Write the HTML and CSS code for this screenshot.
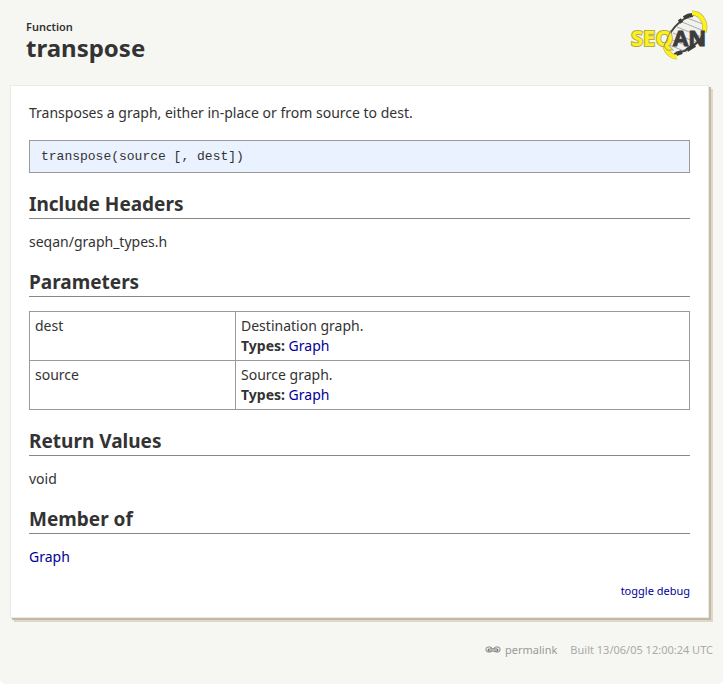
FILE: index.html
```html
<!DOCTYPE html>
<html lang="en">
<head>
<meta charset="utf-8">
<title>transpose</title>
<link rel="stylesheet" href="styles.css">
</head>
<body>
<header class="page-header">
  <div class="title-block">
    <div class="kind">Function</div>
    <h1>transpose</h1>
  </div>
  <svg class="logo" viewBox="0 0 78 50" role="img" aria-label="SeqAn">
    <path class="strand-fill" d="M40 42C33 34 41 19 52 10C59 4 64 3 68 6C78 14 71 29 59 37C50 43 43 47 40 42Z"/>
    <path class="rung" d="M57 7L73 13M52 11L74 20M47 16L74 27M43 22L68 32M40 28L62 37M39 34L57 41"/>
    <path class="strand-dark" d="M39 25C42 18 48 12 54 8Q59 4 64 4M73 24C70 31 62 36 54 40Q49 43 44 43"/>
    <path class="strand-dark-wide" d="M49 11L52 9M54 7Q58 4 63 4M46 43L52 41M57 39L65 34"/>
    <path class="strand-outline" d="M62 2C71 2 77 12 74 21M35 33C35 39 40 46 47 46"/>
    <path class="strand-yellow" d="M62 2C71 2 77 12 74 21M35 33C35 39 40 46 47 46"/>
    <text class="logo-seq" x="1" y="35">SEQ</text>
    <text class="logo-an" x="43" y="35">AN</text>
    <path class="logo-slash" d="M34 35L41 19"/>
  </svg>
</header>
<main class="card">
  <p>Transposes a graph, either in-place or from source to dest.</p>
  <pre class="signature">transpose(source [, dest])</pre>
  <h2>Include Headers</h2>
  <p>seqan/graph_types.h</p>
  <h2>Parameters</h2>
  <table class="params">
    <tbody>
      <tr><td class="param-name">dest</td><td>Destination graph.<br><strong>Types:</strong> <a href="#graph">Graph</a></td></tr>
      <tr><td class="param-name">source</td><td>Source graph.<br><strong>Types:</strong> <a href="#graph">Graph</a></td></tr>
    </tbody>
  </table>
  <h2>Return Values</h2>
  <p>void</p>
  <h2>Member of</h2>
  <p><a href="#graph">Graph</a></p>
  <div class="debug"><a href="#debug">toggle debug</a></div>
</main>
<footer class="page-footer">
  <a class="permalink" href="#permalink"><svg class="chain" viewBox="0 0 16 8" aria-hidden="true">
    <rect class="link-ring" x="1" y="1" width="6" height="5" rx="2"/>
    <rect class="link-ring" x="9" y="1" width="6" height="5" rx="2"/>
    <path class="link-bar" d="M4 4H12"/>
    <path class="link-shine" d="M4 4H12"/>
  </svg>permalink</a>
  <span>Built 13/06/05 12:00:24 UTC</span>
</footer>
</body>
</html>
```

FILE: styles.css
```css
* { box-sizing: border-box; }

html { background: #fff; }

body {
  margin: 0;
  min-height: 100vh;
  padding: 0 10px;
  background: #f6f7f2;
  border-radius: 0 0 5px 5px;
  color: #333;
  font: 14px/20px "Noto Sans", sans-serif;
}

a { color: #009; text-decoration: none; }

.page-header {
  display: flex;
  justify-content: space-between;
  align-items: flex-start;
  height: 85px;
  padding: 11px 5px 0 16px;
}

.title-block { padding-top: 8px; }

.kind { font-size: 11px; font-weight: 600; line-height: 16px; }

h1 { margin: 0; font-size: 24px; line-height: 26px; }

.logo { width: 78px; height: 50px; overflow: visible; }
.logo path { fill: none; }
.logo .strand-fill { fill: #f1f1ed; }
.rung { stroke: #aaa; stroke-width: 1; }
.strand-dark { stroke: #444; stroke-width: 2; }
.strand-dark-wide { stroke: #3b3b3b; stroke-width: 4; }
.strand-outline { stroke: #a8a45a; stroke-width: 5; }
.strand-yellow { stroke: #fff01a; stroke-width: 4; }
.logo text { font: bold 22px "Open Sans", sans-serif; }
.logo-seq { fill: #fff01a; stroke: #b0ac50; stroke-width: 2; paint-order: stroke; }
.logo-an { fill: #3d3b3c; stroke: #3d3b3c; stroke-width: 1; }
.logo-slash { stroke: #8c8c55; stroke-width: 1; }

.card {
  margin-right: 4px;
  padding: 17px 18px 19px;
  background: #fff;
  border: 1px solid #e9e9e5;
  box-shadow: 2px 2px 0 #c4b9a4, 4px 4px 0 #dfd8c8;
}

p { margin: 0 0 17px; }

.signature {
  margin: 0 0 18px;
  padding: 6px 11px 5px;
  background: #ebf2ff;
  border: 1px solid #999;
  font: 13px/20px "Liberation Mono", monospace;
}

h2 {
  margin: 0 0 13px;
  border-bottom: 1px solid #888;
  font-size: 19px;
  line-height: 27px;
}

.params {
  width: 100%;
  margin: 14px 0 18px;
  border-collapse: collapse;
}

.params td {
  padding: 4px 5px;
  border: 1px solid #999;
  line-height: 20px;
  vertical-align: top;
}

.params .param-name { width: 206px; }

.debug { font-size: 11px; line-height: 14px; text-align: right; }

.page-footer {
  display: flex;
  justify-content: flex-end;
  align-items: center;
  gap: 13px;
  padding-top: 24px;
  color: #aaa;
  font-size: 11px;
  line-height: 16px;
}

.permalink {
  display: flex;
  align-items: center;
  gap: 4px;
  color: #999;
}

.chain { width: 16px; height: 8px; fill: none; }
.link-ring { stroke: #888; stroke-width: 1; }
.link-bar { stroke: #777; stroke-width: 3; stroke-linecap: round; }
.link-shine { stroke: #eee; stroke-width: 1; }
```
